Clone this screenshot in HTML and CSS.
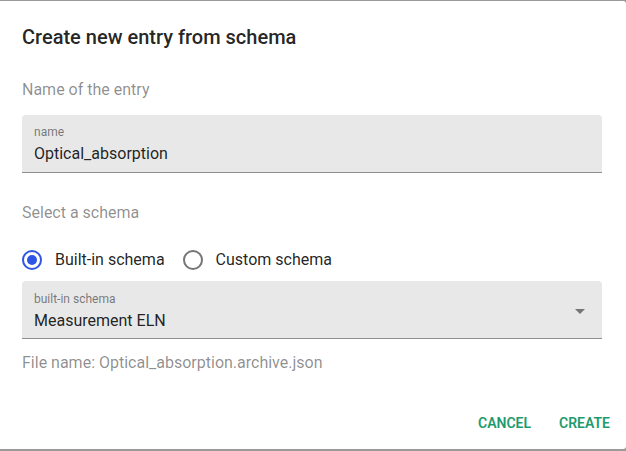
FILE: index.html
```html
<!DOCTYPE html>
<html>
<head>
<meta charset="utf-8">
<link rel="stylesheet" href="styles.css">
</head>
<body>
<div class="dialog">
  <h2 class="title">Create new entry from schema</h2>
  <div class="content">
    <p class="hint hint-first">Name of the entry</p>
    <div class="field">
      <span class="field-label">name</span>
      <span class="field-value">Optical_absorption</span>
    </div>
    <p class="hint hint-schema">Select a schema</p>
    <div class="radios">
      <label class="radio"><span class="radio-icon checked"></span><span>Built-in schema</span></label>
      <label class="radio"><span class="radio-icon"></span><span>Custom schema</span></label>
    </div>
    <div class="field select">
      <span class="field-label">built-in schema</span>
      <span class="field-value">Measurement ELN</span>
      <svg class="arrow" width="24" height="24" viewBox="0 0 24 24"><path d="M7 10l5 5 5-5z" fill="#757575"/></svg>
    </div>
    <p class="hint hint-file">File name: Optical_absorption.archive.json</p>
  </div>
  <div class="actions">
    <button class="btn">CANCEL</button>
    <button class="btn">CREATE</button>
  </div>
</div>
</body>
</html>
```

FILE: styles.css
```css
html, body {
  margin: 0;
  padding: 0;
}
body {
  width: 626px;
  height: 451px;
  background: #9a9a9a;
  padding-top: 1px;
  box-sizing: border-box;
  font-family: Roboto, "Noto Sans", sans-serif;
  overflow: hidden;
}
.dialog {
  background: #fff;
  height: 448px;
  box-sizing: border-box;
  display: flex;
  flex-direction: column;
  border-radius: 0 3px 3px 0;
}
.title {
  margin: 0;
  padding: 24px 22px 0 22px;
  font-size: 20px;
  font-weight: 500;
  line-height: 24px;
  color: rgba(0,0,0,0.87);
}
.content {
  padding: 0 24px 0 22px;
  display: flex;
  flex-direction: column;
}
.hint {
  margin: 0;
  font-size: 16px;
  line-height: 20px;
  color: rgba(0,0,0,0.45);
}
.hint-first { margin-top: 31px; }
.hint-schema { margin-top: 30px; }
.hint-file { margin-top: 14px; }
.field {
  margin-top: 15px;
  background: #e8e8e8;
  border-radius: 4px 4px 0 0;
  border-bottom: 1px solid #8f8f8f;
  display: flex;
  flex-direction: column;
  padding: 10px 12px 0 12px;
  box-sizing: content-box;
  position: relative;
  height: 47px;
}
.field-label {
  font-size: 12px;
  line-height: 14px;
  color: rgba(0,0,0,0.5);
}
.field-value {
  margin-top: 5px;
  font-size: 16px;
  line-height: 20px;
  color: rgba(0,0,0,0.87);
}
.select { margin-top: 11px; padding-top: 11px; height: 46px; }
.arrow {
  position: absolute;
  right: 10px;
  top: 18px;
}
.radios {
  margin-top: 27px;
  display: flex;
  align-items: center;
  gap: 18px;
}
.radio {
  display: flex;
  align-items: center;
  gap: 13px;
  font-size: 16px;
  line-height: 20px;
  color: rgba(0,0,0,0.87);
}
.radio-icon {
  width: 16px;
  height: 16px;
  border: 2px solid #757575;
  border-radius: 50%;
  box-sizing: content-box;
  position: relative;
}
.radio-icon.checked {
  border-color: #2f55e4;
}
.radio-icon.checked::after {
  content: "";
  position: absolute;
  left: 3px;
  top: 3px;
  width: 10px;
  height: 10px;
  border-radius: 50%;
  background: #2f55e4;
}
.actions {
  margin-top: auto;
  padding: 0 8px 10px 0;
  display: flex;
  justify-content: flex-end;
  gap: 12px;
}
.btn {
  background: none;
  border: none;
  padding: 6px 8px;
  font-family: inherit;
  font-size: 14px;
  font-weight: 600;
  letter-spacing: 0;
  color: #1e9b6d;
  line-height: 20px;
}
```
